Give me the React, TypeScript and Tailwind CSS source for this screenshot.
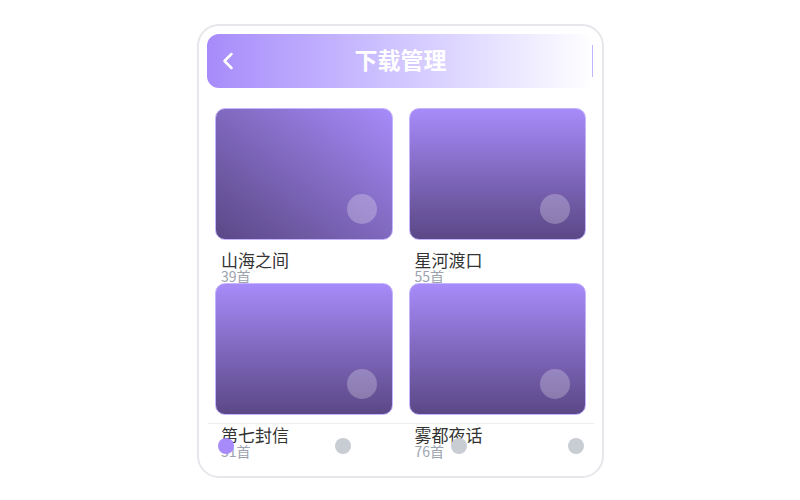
import { ChevronLeft } from 'lucide-react';

// Downloaded playlists
const playlists = [
  { title: '山海之间', count: 39, diagonal: true },
  { title: '星河渡口', count: 55, diagonal: false },
  { title: '第七封信', count: 31, diagonal: false },
  { title: '雾都夜话', count: 76, diagonal: false },
];

const PlaylistCard = ({ title, count, diagonal }: { title: string; count: number; diagonal: boolean }) => (
  <div className="h-[163px]">
    <div
      className={
        diagonal
          ? 'relative h-[132px] rounded-[10px] border border-[#c4b5fd] bg-linear-to-bl from-[#a78bfa] to-[#5b4886]'
          : 'relative h-[132px] rounded-[10px] border border-[#c4b5fd] bg-linear-to-b from-[#a78bfa] to-[#5b4886]'
      }
    >
      <div className="absolute right-[15px] bottom-[15px] w-[30px] h-[30px] rounded-full bg-white/25" />
    </div>
    <div className="pl-[6px] mt-[11px]">
      <div className="text-[17px] leading-[18px] text-[#333333]">{title}</div>
      <div className="text-[14px] leading-[14px] text-[#9ca3af]">{count}首</div>
    </div>
  </div>
);

export default function App() {
  return (
    <div
      className="w-[800px] h-[500px] flex items-center justify-center bg-white pl-[1px] pt-[2px]"
      style={{ fontFamily: '"Noto Sans CJK SC", "Noto Sans", sans-serif' }}
    >
      <div className="relative w-[407px] h-[454px] border-2 border-[#e5e7eb] rounded-[22px] p-2 overflow-hidden">
        {/* Header */}
        <div className="h-[54px] rounded-[12px] bg-linear-to-r from-[#a78bfa] to-white grid grid-cols-[48px_1fr_48px] items-center">
          <div className="pl-[7px] flex items-center text-white">
            <ChevronLeft size={28} strokeWidth={2.2} />
          </div>
          <div className="text-center text-white font-bold text-[23px] leading-none pb-[3px]">下载管理</div>
          <div className="flex justify-end pr-[1px]">
            <div className="w-px h-8 bg-[#c4b5fd]" />
          </div>
        </div>

        {/* Grid */}
        <div className="px-2 pt-5 grid grid-cols-2 gap-x-4 gap-y-3">
          {playlists.map((p) => (
            <PlaylistCard key={p.title} {...p} />
          ))}
        </div>

        {/* Bottom nav */}
        <div className="absolute left-[9px] right-[8px] top-[397px] h-[44px] border-t border-[#eceef1] flex items-center justify-between px-[10px]">
          <div className="w-4 h-4 rounded-full bg-[#a78bfa]" />
          <div className="w-4 h-4 rounded-full bg-[#c8ccd3]" />
          <div className="w-4 h-4 rounded-full bg-[#c8ccd3]" />
          <div className="w-4 h-4 rounded-full bg-[#c8ccd3]" />
        </div>
      </div>
    </div>
  );
}
